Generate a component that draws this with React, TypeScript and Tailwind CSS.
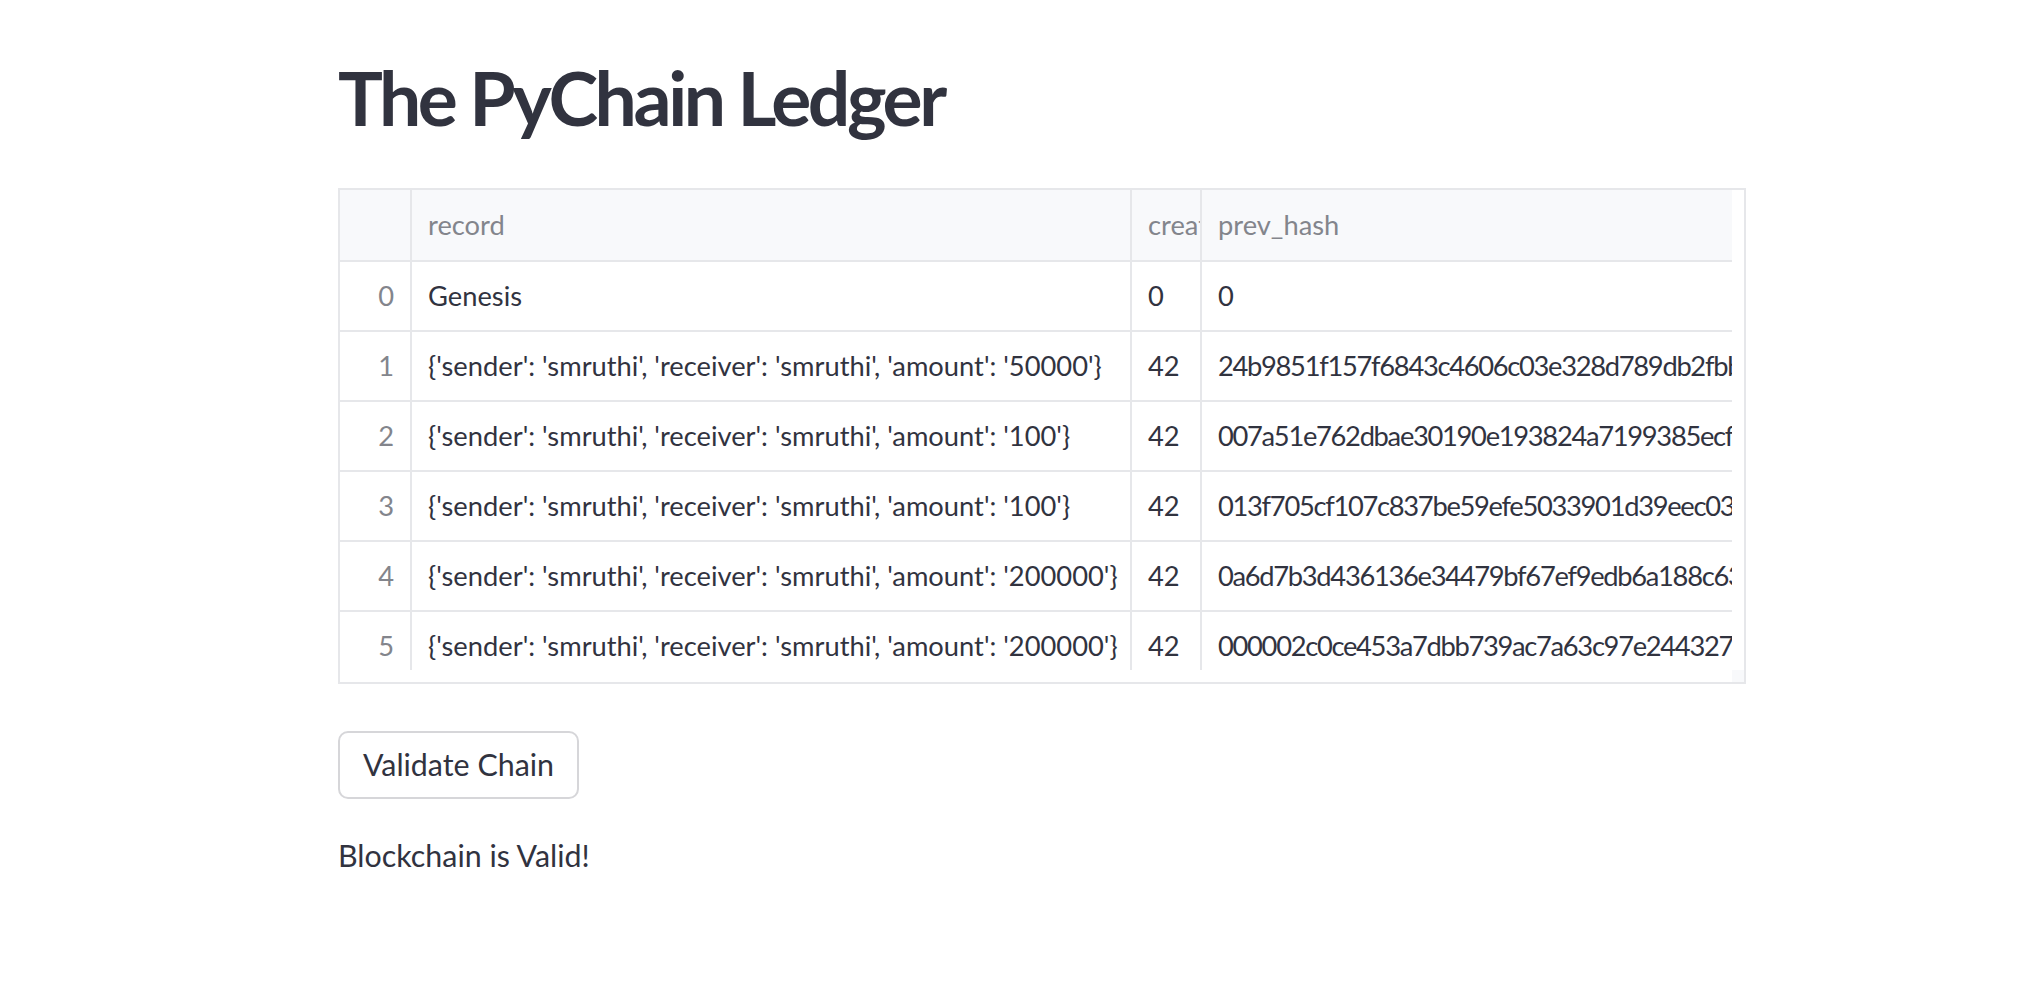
import React from "react";

const FONT = '"Lato", "Noto Sans", sans-serif';

const rows = [
  { i: 0, record: "Genesis", creator: "0", hash: "0" },
  { i: 1, record: "{'sender': 'smruthi', 'receiver': 'smruthi', 'amount': '50000'}", creator: "42", hash: "24b9851f157f6843c4606c03e328d789db2fbb3a91c4e05" },
  { i: 2, record: "{'sender': 'smruthi', 'receiver': 'smruthi', 'amount': '100'}", creator: "42", hash: "007a51e762dbae30190e193824a7199385ecfb2e81d0a47" },
  { i: 3, record: "{'sender': 'smruthi', 'receiver': 'smruthi', 'amount': '100'}", creator: "42", hash: "013f705cf107c837be59efe5033901d39eec0368a1f27cd" },
  { i: 4, record: "{'sender': 'smruthi', 'receiver': 'smruthi', 'amount': '200000'}", creator: "42", hash: "0a6d7b3d436136e34479bf67ef9edb6a188c63e07b9d1f2" },
  { i: 5, record: "{'sender': 'smruthi', 'receiver': 'smruthi', 'amount': '200000'}", creator: "42", hash: "000002c0ce453a7dbb739ac7a63c97e2443275d1f8a06be" },
];

export default function App() {
  return (
    <div className="relative min-h-[994px] w-full bg-white text-[#31333F]" style={{ fontFamily: FONT }}>
      <div className="ml-[338px] w-[1408px] flex flex-col">
        <h1 className="mt-[52px] text-[75px] font-bold leading-[1.2] tracking-[-3.4px] text-[#31333F] whitespace-nowrap">
          The PyChain Ledger
        </h1>

        <div className="mt-[46px] h-[496px] w-[1408px] border-2 border-[#E6E7EA] flex flex-col overflow-hidden">
          <div className="flex h-[480px]">
            <div className="w-[1392px] h-[480px] overflow-hidden">
              <div className="flex h-[72px] bg-[#F8F9FB] border-b-2 border-[#E6E7EA] text-[27.3px] text-[#83858C]">
                <div className="w-[72px] shrink-0 border-r-2 border-[#E6E7EA]" />
                <div className="w-[720px] shrink-0 border-r-2 border-[#E6E7EA] px-4 flex items-center overflow-hidden whitespace-nowrap">
                  record
                </div>
                <div className="w-[70px] shrink-0 border-r-2 border-[#E6E7EA] pl-4 flex items-center overflow-hidden whitespace-nowrap">
                  creator_id
                </div>
                <div className="flex-1 pl-4 flex items-center overflow-hidden whitespace-nowrap">prev_hash</div>
              </div>
              {rows.map((r) => (
                <div key={r.i} className="flex h-[70px] border-b-2 border-[#E6E7EA] text-[27.3px]">
                  <div className="w-[72px] shrink-0 border-r-2 border-[#E6E7EA] pr-4 flex items-center justify-end text-[#83858C]">
                    {r.i}
                  </div>
                  <div className="w-[720px] shrink-0 border-r-2 border-[#E6E7EA] px-4 flex items-center overflow-hidden whitespace-nowrap">
                    {r.record}
                  </div>
                  <div className="w-[70px] shrink-0 border-r-2 border-[#E6E7EA] pl-4 flex items-center overflow-hidden whitespace-nowrap">
                    {r.creator}
                  </div>
                  <div className="flex-1 pl-4 flex items-center overflow-hidden whitespace-nowrap tracking-[-1.3px]">
                    {r.hash}
                  </div>
                </div>
              ))}
            </div>
            <div className="w-[12px] bg-white" />
          </div>
          <div className="flex h-[12px]">
            <div className="w-[1392px] bg-white" />
            <div className="w-[12px] bg-[#F8F9FB]" />
          </div>
        </div>

        <div className="mt-[47px]">
          <button className="h-[68px] w-[241px] rounded-[10px] border-2 border-[#D6D6D9] bg-white text-[30.4px] text-[#31333F] flex items-center justify-center">
            Validate Chain
          </button>
        </div>

        <p className="mt-[32px] text-[30.4px] leading-[1.6] text-[#31333F]">Blockchain is Valid!</p>
      </div>
    </div>
  );
}
